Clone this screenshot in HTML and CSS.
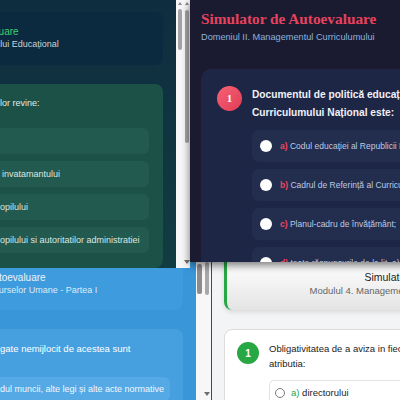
FILE: index.html
```html
<!DOCTYPE html>
<html lang="ro">
<head>
<meta charset="utf-8">
<title>Simulator de Autoevaluare</title>
<link rel="stylesheet" href="styles.css">
</head>
<body>
<div class="desk">

  <section class="win win-white">
    <div class="w-page">
      <header class="w-head">
        <h1 class="w-title">Simulator de Autoevaluare</h1>
        <p class="w-sub">Modulul 4. Managementul Resurselor Umane - Partea I</p>
      </header>
      <div class="w-card">
        <div class="w-qrow">
          <span class="w-num">1</span>
          <p class="w-qtext">Obligativitatea de a aviza in fiecare an statele de personal ale institutiei ii revine ca<br>atributia:</p>
        </div>
        <div class="w-opts">
          <label class="w-opt"><span class="w-radio"></span><span><span class="w-key">a)</span> directorului</span></label>
          <label class="w-opt"><span class="w-radio"></span><span><span class="w-key">b)</span> consiliului de administratie</span></label>
        </div>
      </div>
    </div>
  </section>

  <section class="win win-blue">
    <div class="b-page">
      <header class="b-head">
        <h1 class="b-title">Simulator de Autoevaluare</h1>
        <p class="b-sub">Modulul 4. Managementul Resurselor Umane - Partea I</p>
      </header>
      <div class="b-q">
        <p class="b-qtext">gate nemijlocit de acestea sunt</p>
        <div class="b-opts">
          <div class="b-opt">dul muncii, alte legi și alte acte normative</div>
        </div>
      </div>
    </div>
    <div class="scroll b-scroll">
      <div class="track track-a"><span class="thumb b-thumb-a"></span></div>
      <div class="track track-b"><span class="thumb b-thumb-b"></span><span class="arrow-down"></span></div>
    </div>
  </section>

  <section class="win win-green">
    <div class="g-page">
      <header class="g-head">
        <h1 class="g-title">Simulator de Autoevaluare</h1>
        <p class="g-sub">Modulul 2. Managementul Procesului Educațional</p>
      </header>
      <div class="g-q">
        <p class="g-qtext">lor revine:</p>
        <div class="g-opts">
          <div class="g-opt"></div>
          <div class="g-opt g-opt-2">invatamantului</div>
          <div class="g-opt">opilului</div>
          <div class="g-opt">opilului si autoritatilor administratiei</div>
        </div>
      </div>
    </div>
    <div class="scroll g-scroll">
      <div class="track track-a"><span class="arrow-up"></span><span class="thumb g-thumb-a"></span></div>
      <div class="track track-b"><span class="arrow-up"></span><span class="thumb g-thumb-b"></span><span class="arrow-down"></span></div>
    </div>
  </section>

  <section class="win win-navy">
    <h1 class="n-title">Simulator de Autoevaluare</h1>
    <p class="n-sub">Domeniul II. Managementul Curriculumului</p>
    <div class="n-card">
      <div class="n-qrow">
        <span class="n-num">1</span>
        <p class="n-qtext">Documentul de politică educațională care stabilește conceptul<br>Curriculumului Național este:</p>
      </div>
      <div class="n-opts">
        <label class="n-opt"><span class="n-radio"></span><span><span class="n-key">a)</span> Codul educaţiei al Republicii Moldova;</span></label>
        <label class="n-opt"><span class="n-radio"></span><span><span class="n-key">b)</span> Cadrul de Referință al Curriculumului Național;</span></label>
        <label class="n-opt"><span class="n-radio"></span><span><span class="n-key">c)</span> Planul-cadru de învățământ;</span></label>
        <label class="n-opt"><span class="n-radio"></span><span><span class="n-key">d)</span> toate răspunsurile de la lit. a)-c).</span></label>
      </div>
    </div>
  </section>

</div>
</body>
</html>
```
FILE: styles.css
```css
html, body {
  margin: 0;
  padding: 0;
}
body {
  background: #2a2a2a;
  font-family: "Liberation Sans", Arial, sans-serif;
}
h1, p {
  margin: 0;
  font-weight: normal;
}
.desk {
  position: relative;
  width: 400px;
  height: 400px;
  overflow: hidden;
}
.win {
  position: absolute;
  display: flex;
  overflow: hidden;
  box-sizing: border-box;
}

/* ---------- shared scrollbar ---------- */
.scroll {
  display: flex;
  background: #f7f7f7;
  flex: none;
}
.track {
  display: flex;
  flex-direction: column;
  align-items: center;
}
.thumb {
  display: block;
  background: #a3a3a3;
  border-radius: 2px;
}
.arrow-up {
  width: 0;
  height: 0;
  border-left: 2.5px solid transparent;
  border-right: 2.5px solid transparent;
  border-bottom: 3px solid #8a8a8a;
  margin-top: 2px;
}
.arrow-down {
  width: 0;
  height: 0;
  border-left: 3px solid transparent;
  border-right: 3px solid transparent;
  border-top: 4px solid #6f6f6f;
  margin-top: auto;
  margin-bottom: 4px;
}

/* ---------- green window ---------- */
.win-green {
  left: -256px;
  top: 0;
  width: 446px;
  height: 268px;
  z-index: 3;
}
.g-page {
  flex: 1;
  background: linear-gradient(#0f2d3f, #113c42);
  padding: 12px 13px 0;
  display: flex;
  flex-direction: column;
  gap: 19px;
}
.g-head {
  height: 53px;
  box-sizing: border-box;
  padding-top: 14px;
  background: #0c2a3f;
  border-radius: 8px;
  text-align: center;
}
.g-title {
  font-size: 10px;
  line-height: 12px;
  color: #3fcd6c;
}
.g-sub {
  font-size: 9px;
  line-height: 12px;
  color: #c9d2d4;
}
.g-q {
  flex: 1;
  background: #1b5146;
  border-radius: 8px;
  padding: 13px 14px 0 230px;
}
.g-qtext {
  padding-left: 13px;
  font-size: 9px;
  line-height: 12px;
  color: #e4ece8;
}
.g-opts {
  margin-top: 19px;
  display: flex;
  flex-direction: column;
  gap: 7px;
}
.g-opt {
  min-height: 26px;
  box-sizing: border-box;
  padding: 7px 0 7px 13px;
  background: #235a4f;
  border-radius: 6px;
  font-size: 9px;
  line-height: 12px;
  color: #dbe7e2;
  white-space: nowrap;
}
.g-opt-2 {
  padding-left: 15px;
}
.g-scroll {
  width: 14px;
}
.g-scroll .track-a { width: 7px; }
.g-scroll .track-b { width: 7px; }
.g-thumb-a {
  width: 4px;
  height: 41px;
  margin-top: 4px;
}
.g-thumb-b {
  width: 4px;
  height: 133px;
  margin-top: 5px;
}

/* ---------- navy window ---------- */
.win-navy {
  left: 190px;
  top: 0;
  width: 300px;
  height: 262px;
  z-index: 4;
  display: block;
  padding: 10px 0 0 11px;
  background: #1a1b30;
  border-bottom-left-radius: 3px;
  box-shadow: 0 3px 8px rgba(0, 0, 0, 0.55);
}
.n-title {
  font-family: "Liberation Serif", "Times New Roman", serif;
  font-weight: bold;
  font-size: 15.3px;
  line-height: 18px;
  color: #e8425e;
}
.n-sub {
  margin-top: 2.7px;
  font-size: 9.2px;
  line-height: 13px;
  color: #8db2dc;
}
.n-card {
  margin-top: 25.3px;
  height: 300px;
  background: #1e2646;
  border-radius: 10px;
  padding: 17px 16px 0;
}
.n-qrow {
  display: flex;
  align-items: flex-start;
  gap: 10px;
}
.n-num {
  flex: none;
  width: 25px;
  height: 25px;
  border-radius: 50%;
  background: linear-gradient(135deg, #f46274, #e23c57);
  color: #fff;
  font-family: "Liberation Serif", serif;
  font-weight: bold;
  font-size: 11px;
  display: flex;
  align-items: center;
  justify-content: center;
}
.n-qtext {
  font-weight: bold;
  font-size: 10.2px;
  line-height: 18px;
  margin-top: 0.5px;
  color: #f1f1f6;
  white-space: nowrap;
}
.n-opts {
  margin: 8px 0 0 35px;
  display: flex;
  flex-direction: column;
  gap: 7px;
}
.n-opt {
  height: 32px;
  box-sizing: border-box;
  display: flex;
  align-items: center;
  gap: 8px;
  padding-left: 8px;
  background: #232d4e;
  border-radius: 7px;
  font-size: 8.5px;
  color: #bfcae3;
  white-space: nowrap;
}
.n-radio {
  flex: none;
  width: 12px;
  height: 12px;
  border-radius: 50%;
  background: #fff;
}
.n-key {
  color: #ee4761;
  font-weight: bold;
}

/* ---------- blue window ---------- */
.win-blue {
  left: -225px;
  top: 262px;
  width: 436px;
  height: 138px;
  z-index: 2;
}
.b-page {
  flex: 1;
  background: #3896d9;
  padding: 0 13px 0 16px;
}
.b-head {
  background: #3e9bdd;
  border-radius: 0 0 8px 8px;
  padding: 9px 0 13px;
  text-align: center;
}
.b-title {
  font-size: 10px;
  line-height: 13px;
  color: #ecf4fb;
}
.b-sub {
  font-size: 9px;
  line-height: 13px;
  color: #dcebf7;
}
.b-q {
  margin-top: 19px;
  height: 120px;
  background: #46a0e0;
  border-radius: 8px;
  padding: 12.5px 13px 0 196px;
}
.b-qtext {
  padding-left: 13px;
  font-size: 9.5px;
  line-height: 13px;
  color: #fff;
  white-space: nowrap;
}
.b-opts {
  margin-top: 22.5px;
}
.b-opt {
  background: #55a9e4;
  border-radius: 6px;
  padding: 6px 0 6px 13px;
  font-size: 9px;
  line-height: 12px;
  color: #f1f8fd;
  white-space: nowrap;
}
.b-scroll {
  width: 15px;
}
.b-scroll .track-a { width: 7px; }
.b-scroll .track-b { width: 8px; }
.b-thumb-a {
  width: 5px;
  height: 30px;
  margin-top: 2px;
  background: #8c8c8c;
}
.b-thumb-b {
  width: 4px;
  height: 33px;
  background: #a8a8a8;
}

/* ---------- white window ---------- */
.win-white {
  left: 211px;
  top: 240px;
  width: 430px;
  height: 160px;
  z-index: 1;
  border-left: 1px solid #4a4a4a;
  background: #f3f4f5;
}
.w-page {
  padding-left: 12px;
}
.w-head {
  width: 401px;
  height: 70px;
  box-sizing: border-box;
  padding-top: 31px;
  border-left: 3px solid #28a745;
  border-radius: 0 0 8px 8px;
  background: linear-gradient(#ffffff 30%, #e4e4e4);
  box-shadow: 0 2px 5px rgba(0, 0, 0, 0.12);
  text-align: center;
}
.w-title {
  font-size: 10.5px;
  line-height: 13px;
  color: #222;
}
.w-sub {
  font-size: 9.5px;
  line-height: 13px;
  color: #666;
}
.w-card {
  margin-top: 19px;
  width: 400px;
  height: 120px;
  box-sizing: border-box;
  background: #fff;
  border: 1px solid #dcdcdc;
  border-radius: 8px;
  padding: 12px;
}
.w-qrow {
  display: flex;
  align-items: flex-start;
  gap: 10px;
}
.w-num {
  flex: none;
  width: 22px;
  height: 22px;
  border-radius: 50%;
  background: #28a745;
  color: #fff;
  font-weight: bold;
  font-size: 10px;
  display: flex;
  align-items: center;
  justify-content: center;
}
.w-qtext {
  font-size: 9.5px;
  line-height: 14.5px;
  color: #222;
  white-space: nowrap;
}
.w-opts {
  margin: 9px 0 0 32px;
  display: flex;
  flex-direction: column;
  gap: 6px;
}
.w-opt {
  display: flex;
  align-items: center;
  gap: 6px;
  padding: 5px;
  border: 1px solid #e2e2e2;
  border-radius: 5px;
  font-size: 9.5px;
  line-height: 13px;
  color: #222;
  white-space: nowrap;
}
.w-radio {
  flex: none;
  width: 8px;
  height: 8px;
  border: 1px solid #7a7a7a;
  border-radius: 50%;
  background: #fff;
}
.w-key {
  color: #28a745;
}
```
